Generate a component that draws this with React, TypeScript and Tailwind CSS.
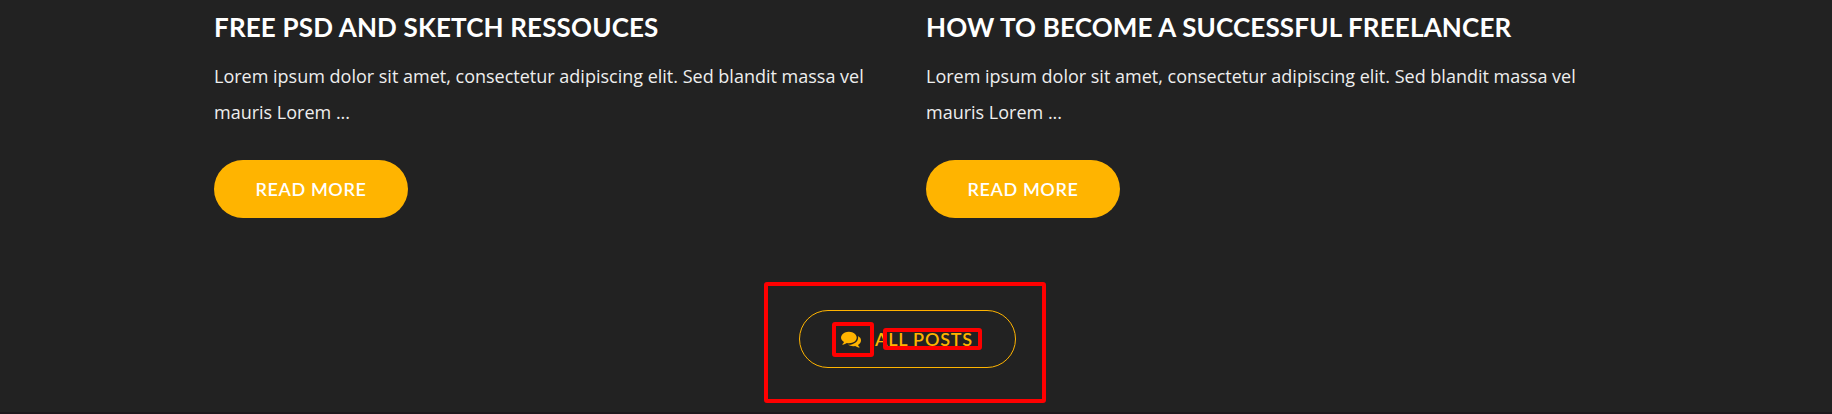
const excerpt = "Lorem ipsum dolor sit amet, consectetur adipiscing elit. Sed blandit massa vel mauris Lorem ...";

function CommentsIcon() {
  return (
    <svg viewBox="0 0 1792 1792" fill="currentColor" className="h-[20px] w-[20px] shrink-0">
      <path d="M1408 768q0 139-94 257t-256.5 186.5-353.5 68.5q-86 0-176-16-124 88-278 128-36 9-86 16h-3q-11 0-20.5-8t-11.5-21q-1-3-1-6.5t.5-6.5 2-6l2.5-5 3.5-5.5 4-5 4.5-5 4-4.5q5-6 23-25t26-29.5 22.5-29 25-38.5 20.5-44q-124-72-195-177t-71-224q0-139 94-257t256.5-186.5 353.5-68.5 353.5 68.5 256.5 186.5 94 257zm384 256q0 120-71 224.5t-195 176.5q10 24 20.5 44t25 38.5 22.5 29 26 29.5 23 25q1 1 4 4.5t4.5 5 4 5 3.5 5.5l2.5 5 2 6 .5 6.5-1 6.5q-3 14-13 22t-22 7q-50-7-86-16-154-40-278-128-90 16-176 16-271 0-472-132 58 4 88 4 161 0 309-45t264-129q125-92 192-212t67-254q0-77-23-152 129 71 204 178t75 230z" />
    </svg>
  );
}

function Post({ title }: { title: string }) {
  return (
    <article className="w-[672px]">
      <h2 className="h-[58px] whitespace-nowrap pt-[7px] font-['Lato'] text-[26px] font-bold leading-[40px] tracking-[0.16px] text-white">
        {title}
      </h2>
      <p className="font-['Open_Sans'] text-[18px] leading-[36px] text-[#eeeeee]">{excerpt}</p>
      <button className="mt-[30px] flex h-[58px] w-[194px] items-center justify-center rounded-[30px] bg-[#ffb400] font-['Lato'] text-[18px] font-semibold tracking-[0.6px] text-white">
        READ MORE
      </button>
    </article>
  );
}

export default function App() {
  return (
    <main className="flex h-[414px] w-full flex-col overflow-hidden bg-[#222222]">
      <div className="flex gap-[40px] pl-[214px]">
        <Post title="FREE PSD AND SKETCH RESSOUCES" />
        <Post title="HOW TO BECOME A SUCCESSFUL FREELANCER" />
      </div>
      <div className="relative ml-[764px] mt-[64px] h-[121px] w-[282px] rounded-[3px] border-4 border-[#ff0000] pl-[31px] pt-[24px]">
        <button className="flex h-[58px] w-[217px] items-center rounded-[30px] border border-[#ffb400] pl-[41px] text-[#ffb400]">
          <CommentsIcon />
          <span className="ml-[14px] whitespace-nowrap font-['Lato'] text-[18px] font-semibold tracking-[0.8px]">ALL POSTS</span>
        </button>
        <span className="absolute left-[64px] top-[36px] h-[35px] w-[42px] rounded-[3px] border-4 border-[#ff0000]" />
        <span className="absolute left-[115px] top-[42px] h-[22px] w-[99px] rounded-[3px] border-4 border-[#ff0000]" />
      </div>
      <div className="mt-auto h-[2px] bg-[#1c181c]" />
    </main>
  );
}
